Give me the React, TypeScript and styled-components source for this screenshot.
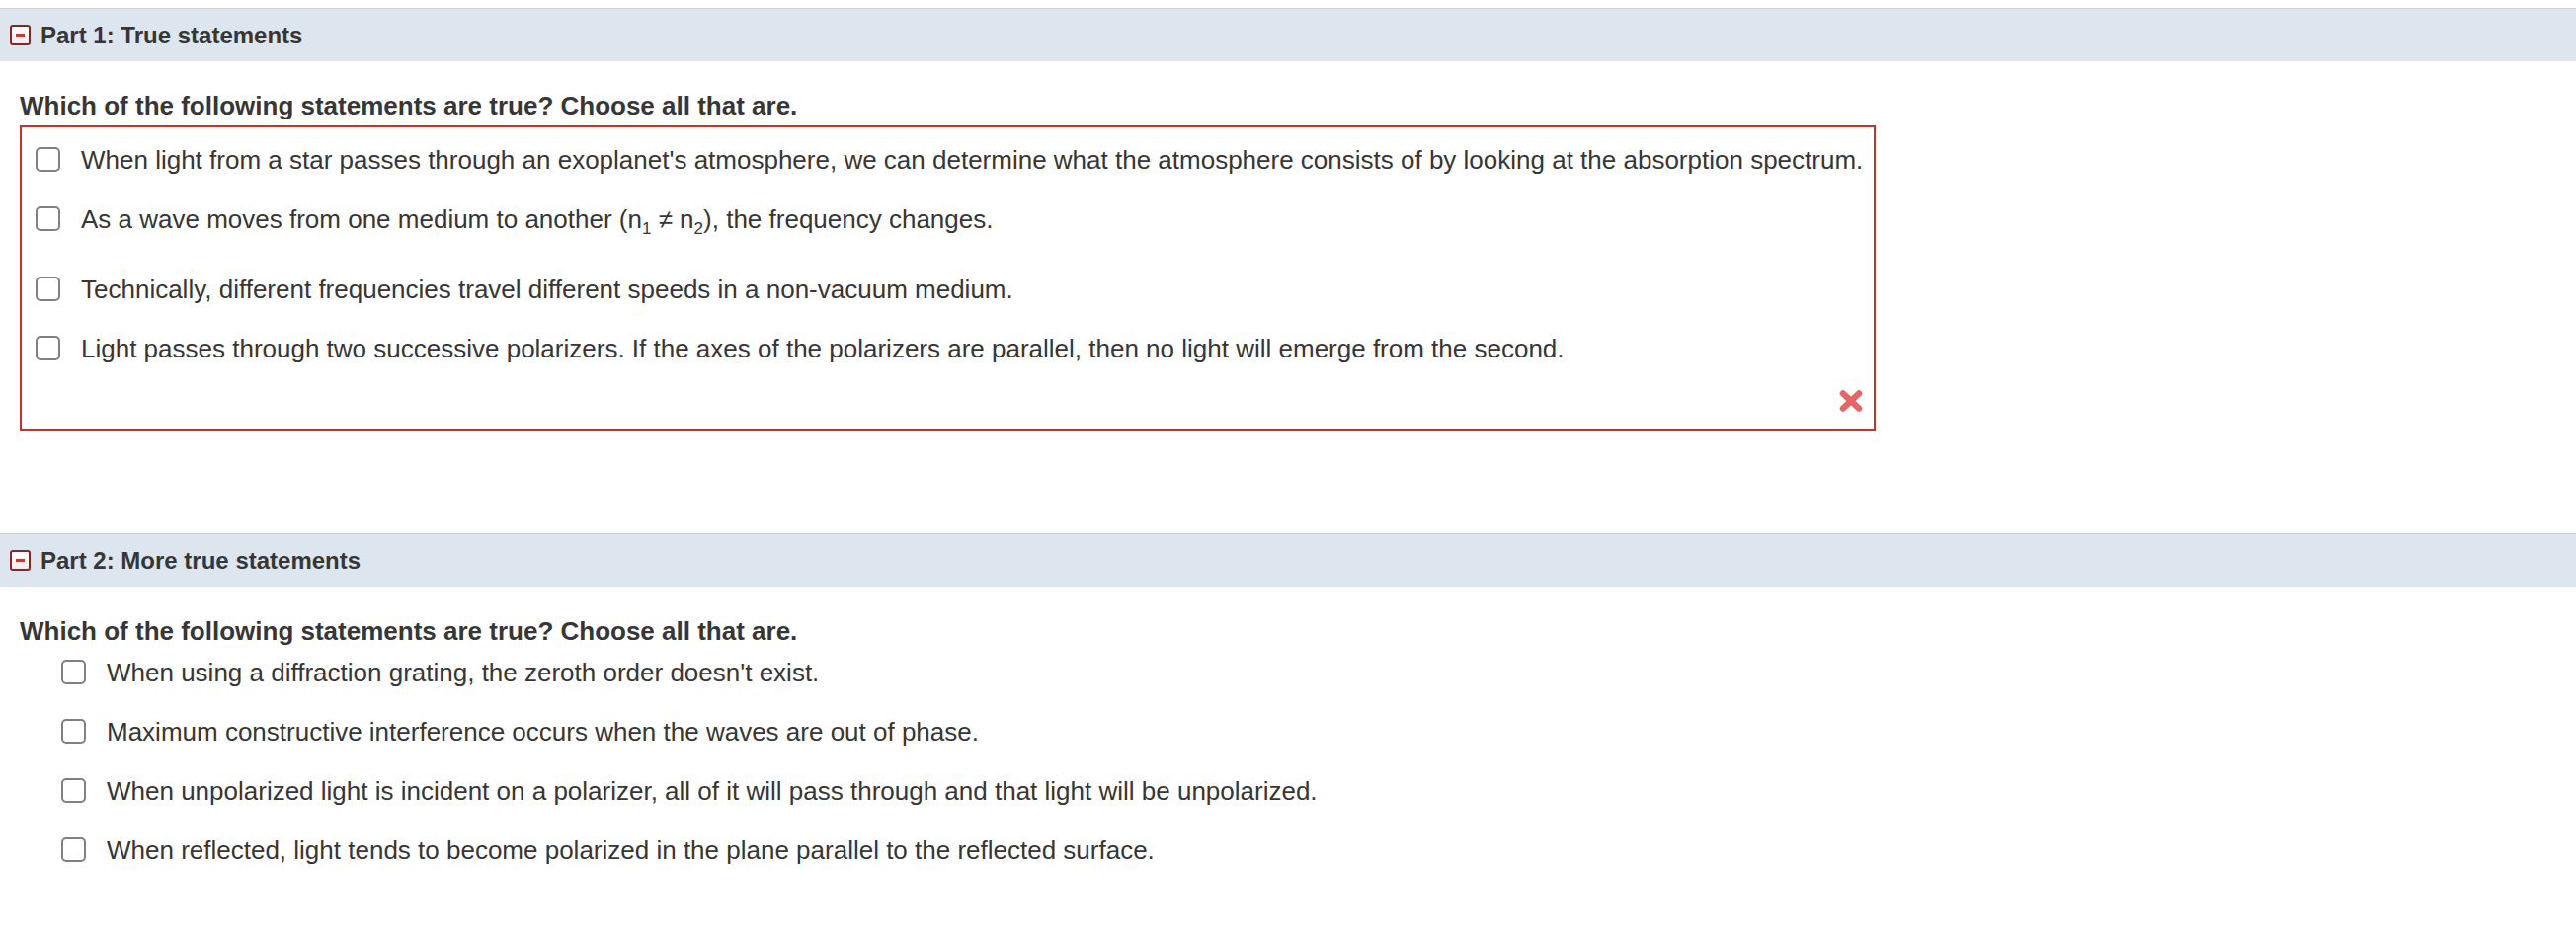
import React from "react";
import styled, { createGlobalStyle } from "styled-components";

const Global = createGlobalStyle`
  html, body { margin: 0; padding: 0; background: #ffffff; }
  body { font-family: "Liberation Sans", Arial, Helvetica, sans-serif; color: #363636; }
`;

const Page = styled.div`
  padding-top: 8px;
  display: flex;
  flex-direction: column;
`;

const Section = styled.section<{ $gapTop?: number }>`
  margin-top: ${(p) => p.$gapTop ?? 0}px;
`;

const PartHeader = styled.div`
  height: 53px;
  border-top: 1px solid #cfd0d2;
  background: #dde6ef;
  display: flex;
  align-items: center;
  padding-left: 10px;
  gap: 10px;
`;

const ToggleIcon = styled.span`
  box-sizing: border-box;
  width: 21px;
  height: 21px;
  border: 2px solid #8c2424;
  border-radius: 3px;
  background: linear-gradient(#ffffff, #eeeeee);
  display: flex;
  align-items: center;
  justify-content: center;
  &::after {
    content: "";
    width: 9px;
    height: 3px;
    background: #c23b3b;
  }
`;

const PartTitle = styled.h2`
  margin: 0;
  font-size: 24px;
  font-weight: 700;
  color: #363636;
`;

const Question = styled.p`
  margin: 30px 0 0 20px;
  font-size: 26px;
  line-height: 30px;
  font-weight: 700;
  color: #363636;
`;

const AnswerBox = styled.div<{ $wrong?: boolean }>`
  box-sizing: border-box;
  width: ${(p) => (p.$wrong ? "1879px" : "auto")};
  margin: ${(p) => (p.$wrong ? "5px 0 0 20px" : "0 0 0 62px")};
  border: ${(p) => (p.$wrong ? "2px solid #c8302c" : "none")};
  padding: ${(p) => (p.$wrong ? "6px 0 0 14px" : "0")};
  display: flex;
  flex-direction: column;
`;

const Row = styled.label<{ $extra?: number }>`
  display: flex;
  align-items: flex-start;
  gap: 21px;
  padding: 12px 0 ${(p) => 18 + (p.$extra ?? 0)}px;
  cursor: pointer;
`;

const Box = styled.input`
  appearance: none;
  box-sizing: border-box;
  flex: none;
  width: 25px;
  height: 25px;
  margin: 2px 0 0;
  border: 2px solid #808080;
  border-radius: 5px;
  background: #ffffff;
`;

const Label = styled.span`
  font-size: 26px;
  line-height: 30px;
  color: #363636;
  white-space: nowrap;
`;

const Sub = styled.sub`
  font-size: 17px;
  line-height: 1;
  vertical-align: -6px;
`;

const Feedback = styled.div`
  display: flex;
  justify-content: flex-end;
  padding: 8px 10px 16px 0;
`;

const WrongMark = () => (
  <svg width="26" height="24" viewBox="0 0 26 24" aria-label="incorrect">
    <g stroke="#e45a5c" strokeWidth="6.5" strokeLinecap="round" opacity="0.92">
      <line x1="5" y1="4.5" x2="21" y2="19.5" />
      <line x1="21" y1="4.5" x2="5" y2="19.5" />
    </g>
  </svg>
);

const part1 = [
  <>When light from a star passes through an exoplanet's atmosphere, we can determine what the atmosphere consists of by looking at the absorption spectrum.</>,
  <>
    As a wave moves from one medium to another (n<Sub>1</Sub> ≠ n<Sub>2</Sub>), the frequency changes.
  </>,
  <>Technically, different frequencies travel different speeds in a non-vacuum medium.</>,
  <>Light passes through two successive polarizers. If the axes of the polarizers are parallel, then no light will emerge from the second.</>,
];

const part2 = [
  "When using a diffraction grating, the zeroth order doesn't exist.",
  "Maximum constructive interference occurs when the waves are out of phase.",
  "When unpolarized light is incident on a polarizer, all of it will pass through and that light will be unpolarized.",
  "When reflected, light tends to become polarized in the plane parallel to the reflected surface.",
];

export default function App() {
  return (
    <Page>
      <Global />
      <Section>
        <PartHeader>
          <ToggleIcon />
          <PartTitle>Part 1: True statements</PartTitle>
        </PartHeader>
        <Question>Which of the following statements are true? Choose all that are.</Question>
        <AnswerBox $wrong>
          {part1.map((t, i) => (
            <Row key={i} $extra={i === 1 ? 8 : 0}>
              <Box type="checkbox" />
              <Label>{t}</Label>
            </Row>
          ))}
          <Feedback>
            <WrongMark />
          </Feedback>
        </AnswerBox>
      </Section>
      <Section $gapTop={104}>
        <PartHeader>
          <ToggleIcon />
          <PartTitle>Part 2: More true statements</PartTitle>
        </PartHeader>
        <Question>Which of the following statements are true? Choose all that are.</Question>
        <AnswerBox>
          {part2.map((t, i) => (
            <Row key={i}>
              <Box type="checkbox" />
              <Label>{t}</Label>
            </Row>
          ))}
        </AnswerBox>
      </Section>
    </Page>
  );
}
